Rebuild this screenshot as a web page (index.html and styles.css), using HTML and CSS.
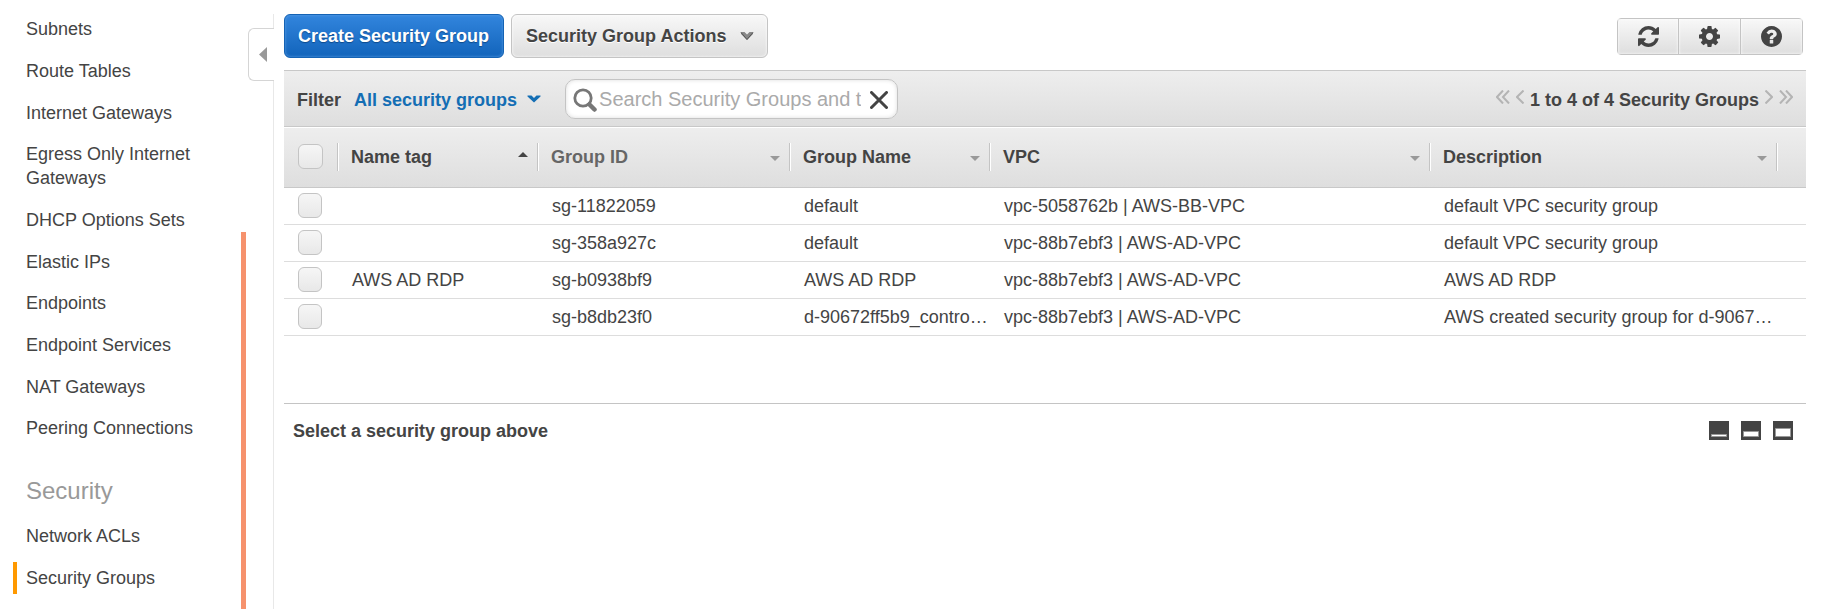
FILE: index.html
```html
<!DOCTYPE html>
<html lang="en">
<head>
<meta charset="utf-8">
<title>Security Groups</title>
<link rel="stylesheet" href="styles.css">
</head>
<body>
<div class="app">
  <aside class="sidebar">
    <nav>
      <ul class="nav-list">
        <li><a href="#">Subnets</a></li>
        <li><a href="#">Route Tables</a></li>
        <li><a href="#">Internet Gateways</a></li>
        <li><a href="#">Egress Only Internet Gateways</a></li>
        <li><a href="#">DHCP Options Sets</a></li>
        <li><a href="#">Elastic IPs</a></li>
        <li><a href="#">Endpoints</a></li>
        <li><a href="#">Endpoint Services</a></li>
        <li><a href="#">NAT Gateways</a></li>
        <li><a href="#">Peering Connections</a></li>
      </ul>
      <h2 class="nav-heading">Security</h2>
      <ul class="nav-list">
        <li><a href="#">Network ACLs</a></li>
        <li><a href="#" class="active">Security Groups</a></li>
      </ul>
    </nav>
    <div class="scroll-mark"></div>
    <button class="collapse" type="button" aria-label="Collapse navigation">
      <svg width="8" height="15" viewBox="0 0 8 15"><path d="M8 0v15L0 7.500z" fill="#999"/></svg>
    </button>
  </aside>

  <main class="main">
    <div class="toolbar">
      <button class="btn primary" type="button">Create Security Group</button>
      <button class="btn" type="button">Security Group Actions
        <svg width="14" height="10" viewBox="0 0 14 10"><path d="M1 1h3.500L7 3.500 9.500 1H13v2L7 9 1 3z" fill="#888"/><path d="M1 1.500l6 7 6-7" fill="none" stroke="#555" stroke-width="1"/></svg>
      </button>
      <div class="icon-group">
        <button type="button" aria-label="Refresh"><svg width="21" height="21" viewBox="0 0 1536 1536"><path d="M1511 928q0 5-1 7-64 268-268 434.500t-478 166.500q-146 0-282.500-55t-243.500-157l-129 129q-19 19-45 19t-45-19-19-45v-448q0-26 19-45t45-19h448q26 0 45 19t19 45-19 45l-137 137q71 66 161 102t187 36q134 0 250-65t186-179q11-17 53-117 8-23 30-23h192q13 0 22.500 9.500t9.500 22.500zm25-800v448q0 26-19 45t-45 19h-448q-26 0-45-19t-19-45 19-45l138-138q-148-137-349-137-134 0-250 65t-186 179q-11 17-53 117-8 23-30 23h-199q-13 0-22.500-9.500t-9.500-22.500v-7q65-268 270-434.500t480-166.500q146 0 284 55.500t245 156.500l130-129q19-19 45-19t45 19 19 45z"/></svg></button>
        <button type="button" aria-label="Settings"><svg width="21" height="21" viewBox="0 0 1536 1536"><path d="M1024 768q0-106-75-181t-181-75-181 75-75 181 75 181 181 75 181-75 75-181zm512-109v222q0 12-8 23t-20 13l-185 28q-19 54-39 91 35 50 107 138 10 12 10 25t-9 23q-27 37-99 108t-94 71q-12 0-26-9l-138-108q-44 23-91 38-16 136-29 186-7 28-36 28h-222q-14 0-24.500-8.500t-11.500-21.500l-28-184q-49-16-90-37l-141 107q-10 9-25 9-14 0-25-11-126-114-165-168-7-10-7-23 0-12 8-23 15-21 51-66.500t54-70.500q-27-50-41-99l-183-27q-13-2-21-12.500t-8-23.500v-222q0-12 8-23t19-13l186-28q14-46 39-92-40-57-107-138-10-12-10-24 0-10 9-23 26-36 98.500-107.500t94.500-71.500q13 0 26 10l138 107q44-23 91-38 16-136 29-186 7-28 36-28h222q14 0 24.500 8.500t11.500 21.500l28 184q49 16 90 37l142-107q9-9 24-9 13 0 25 10 129 119 165 170 7 8 7 22 0 12-8 23-15 21-51 66.500t-54 70.500q26 50 41 98l183 28q13 2 21 12.500t8 23.500z"/></svg></button>
        <button type="button" aria-label="Help"><svg width="21" height="21" viewBox="0 0 1536 1536"><path d="M896 1248v-192q0-14-9-23t-23-9h-192q-14 0-23 9t-9 23v192q0 14 9 23t23 9h192q14 0 23-9t9-23zm256-672q0-88-55.500-163t-138.500-116-170-41q-243 0-371 213-15 24 8 42l132 100q7 6 19 6 16 0 25-12 53-68 86-92 34-24 86-24 48 0 85.500 26t37.500 59q0 38-20 61t-68 45q-63 28-115.500 86.500t-52.500 125.500v36q0 14 9 23t23 9h192q14 0 23-9t9-23q0-19 21.500-49.500t54.500-49.500q32-18 49-28.500t46-35 44.500-48 28-60.500 12.500-81zm384 192q0 209-103 385.500t-279.500 279.500-385.500 103-385.500-103-279.500-279.500-103-385.500 103-385.500 279.500-279.500 385.500-103 385.500 103 279.500 279.500 103 385.500z"/></svg></button>
      </div>
    </div>

    <div class="filter-bar">
      <span class="filter-label">Filter</span>
      <button class="filter-menu" type="button">All security groups
        <svg width="14" height="8" viewBox="0 0 14 8"><path d="M0.500 0.500h4L7 3 9.500 0.500h4v1L7 7.500 0.500 1.500z" fill="#146eb4"/></svg>
      </button>
      <div class="search">
        <svg width="24" height="24" viewBox="0 0 24 24" fill="none" stroke="#777"><circle cx="10" cy="10" r="8.200" stroke-width="2.800"/><path d="M16.500 16.500l5 5" stroke-width="4.500" stroke-linecap="round"/></svg>
        <input type="text" aria-label="Search Security Groups" placeholder="Search Security Groups and their attributes">
        <button type="button" aria-label="Clear search"><svg width="18" height="18" viewBox="0 0 18 18"><path d="M1.500 1.500l15 15m0-15l-15 15" stroke="#444" stroke-width="3" stroke-linecap="round"/></svg></button>
      </div>
      <div class="pager">
        <button type="button" aria-label="First page"><svg width="14" height="14" viewBox="0 0 14 14"><path d="M7 0.500L1 7l6 6.500M13 0.500L7 7l6 6.500"/></svg></button>
        <button type="button" aria-label="Previous page"><svg width="8" height="14" viewBox="0 0 8 14"><path d="M7.500 0.500L1 7l6.500 6.500"/></svg></button>
        <span>1 to 4 of 4 Security Groups</span>
        <button type="button" aria-label="Next page"><svg width="8" height="14" viewBox="0 0 8 14"><path d="M0.500 0.500L7 7 0.500 13.500"/></svg></button>
        <button type="button" aria-label="Last page"><svg width="14" height="14" viewBox="0 0 14 14"><path d="M1 0.500L7 7l-6 6.500M7 0.500L13 7l-6 6.500"/></svg></button>
      </div>
    </div>

    <table class="groups">
      <colgroup>
        <col class="col-check"><col class="col-tag"><col class="col-id"><col class="col-name"><col><col class="col-desc"><col class="col-end">
      </colgroup>
      <thead>
        <tr>
          <th class="check"><div class="head"><input type="checkbox" aria-label="Select all"></div></th>
          <th><div class="head">Name tag <svg width="10" height="11" viewBox="0 0 10 11"><path d="M0 6L5 1l5 5z" fill="#444"/></svg></div></th>
          <th class="muted"><div class="head">Group ID <svg width="10" height="11" viewBox="0 0 10 11"><path d="M0 5h10L5 10z" fill="#999"/></svg></div></th>
          <th><div class="head">Group Name <svg width="10" height="11" viewBox="0 0 10 11"><path d="M0 5h10L5 10z" fill="#999"/></svg></div></th>
          <th><div class="head">VPC <svg width="10" height="11" viewBox="0 0 10 11"><path d="M0 5h10L5 10z" fill="#999"/></svg></div></th>
          <th><div class="head">Description <svg width="10" height="11" viewBox="0 0 10 11"><path d="M0 5h10L5 10z" fill="#999"/></svg></div></th>
          <th></th>
        </tr>
      </thead>
      <tbody>
        <tr><td class="check"><input type="checkbox" aria-label="Select sg-11822059"></td><td></td><td>sg-11822059</td><td>default</td><td>vpc-5058762b | AWS-BB-VPC</td><td>default VPC security group</td><td></td></tr>
        <tr><td class="check"><input type="checkbox" aria-label="Select sg-358a927c"></td><td></td><td>sg-358a927c</td><td>default</td><td>vpc-88b7ebf3 | AWS-AD-VPC</td><td>default VPC security group</td><td></td></tr>
        <tr><td class="check"><input type="checkbox" aria-label="Select sg-b0938bf9"></td><td>AWS AD RDP</td><td>sg-b0938bf9</td><td>AWS AD RDP</td><td>vpc-88b7ebf3 | AWS-AD-VPC</td><td>AWS AD RDP</td><td></td></tr>
        <tr><td class="check"><input type="checkbox" aria-label="Select sg-b8db23f0"></td><td></td><td>sg-b8db23f0</td><td>d-90672ff5b9_controllers</td><td>vpc-88b7ebf3 | AWS-AD-VPC</td><td>AWS created security group for d-90672ff5b9 directory controllers</td><td></td></tr>
      </tbody>
    </table>

    <section class="details">
      <h3>Select a security group above</h3>
      <div class="pane-sizes">
        <button type="button" aria-label="Small pane"><svg width="20" height="19" viewBox="0 0 20 19"><path d="M0 0h20v19H0z" fill="#444"/><path d="M2.500 13.500h15v2h-15z" fill="#fff" stroke="#999"/></svg></button>
        <button type="button" aria-label="Medium pane"><svg width="20" height="19" viewBox="0 0 20 19"><path d="M0 0h20v19H0z" fill="#444"/><path d="M2.500 10.500h15v5h-15z" fill="#fff" stroke="#999"/></svg></button>
        <button type="button" aria-label="Large pane"><svg width="20" height="19" viewBox="0 0 20 19"><path d="M0 0h20v19H0z" fill="#444"/><path d="M2.500 7.500h15v8h-15z" fill="#fff" stroke="#999"/></svg></button>
      </div>
    </section>
  </main>
</div>
</body>
</html>
```
FILE: styles.css
```css
* { box-sizing: border-box; }

body {
  margin: 0;
  background: #fff;
  color: #444;
  font: 18px/24px "Liberation Sans", Arial, sans-serif;
}

button, input { font: inherit; color: inherit; }

button {
  margin: 0;
  padding: 0;
  border: 0;
  background: none;
  cursor: pointer;
}

svg { display: block; flex: none; }

.app {
  display: flex;
  min-height: 100vh;
  padding-top: 14px;
}

/* Navigation */
.sidebar {
  position: relative;
  flex: none;
  width: 274px;
  padding-left: 13px;
  border-right: 1px solid #e8e8e8;
}

.nav-list {
  margin: 0;
  padding: 0;
  list-style: none;
}

.nav-list:first-child { margin-top: -1px; }

.nav-list li { margin-bottom: 10px; }
.nav-list li:nth-child(3n) { margin-bottom: 9px; }
.nav-list li:last-child { margin-bottom: 0; }

.nav-list a {
  display: block;
  width: 200px;
  padding: 4px 0 4px 9px;
  border-left: 4px solid transparent;
  color: #444;
  text-decoration: none;
}

.nav-list a.active { border-left-color: #ff9900; }

.nav-heading {
  margin: 31px 0 13px 13px;
  color: #999;
  font-size: 24px;
  font-weight: normal;
  line-height: 32px;
}

.scroll-mark {
  position: absolute;
  top: 218px;
  right: 27px;
  bottom: 0;
  width: 5px;
  background: #f6926d;
}

.collapse {
  position: absolute;
  top: 14px;
  right: -1px;
  display: flex;
  align-items: center;
  width: 26px;
  height: 53px;
  padding-left: 10px;
  border: 1px solid #d5d5d5;
  border-right: 0;
  border-radius: 6px 0 0 6px;
  background: #fff;
}

/* Content */
.main {
  flex: 1;
  min-width: 0;
  padding: 0 35px 0 10px;
}

.toolbar {
  display: flex;
  align-items: center;
  gap: 7px;
  margin-bottom: 12px;
}

.btn {
  display: flex;
  align-items: center;
  gap: 14px;
  height: 44px;
  padding: 0 13px 0 14px;
  border: 1px solid #c4c4c4;
  border-radius: 6px;
  background: linear-gradient(#f8f8f8, #dedede);
  box-shadow: inset 0 0 3px #fff;
  font-weight: bold;
  text-shadow: 0 1px 0 #fff;
  white-space: nowrap;
}

.btn.primary {
  padding-left: 13px;
  padding-right: 14px;
  border-color: #1563b4;
  background: linear-gradient(#3285dd, #1264bb);
  box-shadow: inset 0 0 3px #5b9fe4;
  color: #fff;
  text-shadow: 0 1px 1px #0d4a8c;
}

.icon-group {
  display: flex;
  height: 37px;
  margin-left: auto;
  margin-right: 3px;
  border: 1px solid #c4c4c4;
  border-radius: 4px;
  background: linear-gradient(#f8f8f8, #dedede);
}

.icon-group button {
  display: flex;
  align-items: center;
  justify-content: center;
  width: 62px;
  box-shadow: inset 0 0 3px #fff;
}

.icon-group button:first-child { width: 60px; }
.icon-group button + button { border-left: 1px solid #c4c4c4; }
.icon-group svg { fill: #444; }

.filter-bar {
  display: flex;
  align-items: center;
  height: 57px;
  padding: 0 13px;
  border-top: 1px solid #c8c8c8;
  border-bottom: 1px solid #c8c8c8;
  background: linear-gradient(#eee, #dedede);
  font-weight: bold;
  white-space: nowrap;
}

.filter-label { margin-right: 13px; padding-top: 2px; }

.filter-menu {
  display: flex;
  align-items: center;
  gap: 10px;
  margin-right: 24px;
  padding-top: 2px;
  color: #146eb4;
}

.filter-menu svg { margin-bottom: 2px; }

.search {
  display: flex;
  align-items: center;
  width: 333px;
  height: 40px;
  padding: 0 9px 0 7px;
  border: 1px solid #c4c4c4;
  border-radius: 10px;
  background: #fff;
  box-shadow: inset 0 0 4px #ddd;
}

.search svg { margin-top: 2px; }

.search input {
  flex: 1;
  min-width: 0;
  margin: 0 9px 0 2px;
  padding: 0;
  border: 0;
  outline: 0;
  background: none;
  font-size: 20px;
  font-weight: normal;
}

.search input::placeholder { color: #aaa; opacity: 1; }

.pager {
  display: flex;
  align-items: center;
  gap: 6px;
  margin-left: auto;
}

.pager span { padding-top: 2px; }
.pager button { padding-bottom: 4px; }
.pager svg { fill: none; stroke: #b4b4b4; stroke-width: 2; }

/* Table */
.groups {
  width: 100%;
  border-collapse: collapse;
  table-layout: fixed;
}

.col-check { width: 54px; }
.col-tag { width: 200px; }
.col-id { width: 252px; }
.col-name { width: 200px; }
.col-desc { width: 347px; }
.col-end { width: 29px; }

.groups thead {
  background: linear-gradient(#eee, #dedede);
  box-shadow: inset 0 1px 0 #fff;
}

.groups th {
  height: 60px;
  padding: 0;
  border-bottom: 1px solid #c8c8c8;
  text-align: left;
}

.head {
  display: flex;
  align-items: center;
  justify-content: space-between;
  height: 28px;
  padding: 0 9px 0 13px;
  border-right: 1px solid #c4c4c4;
  box-shadow: 1px 0 0 #fff;
}

.check .head { padding-left: 14px; }

.groups .muted { color: #666; }

.groups td {
  height: 37px;
  padding: 0 0 0 14px;
  overflow: hidden;
  border-bottom: 1px solid #ddd;
  text-overflow: ellipsis;
  white-space: nowrap;
}

.groups input {
  display: block;
  flex: none;
  width: 25px;
  height: 25px;
  margin: 0;
  appearance: none;
  border: 1px solid #c4c4c4;
  border-radius: 6px;
  background: linear-gradient(#f6f6f6, #e8e8e8);
}

.groups td input { width: 24px; }

/* Details pane */
.details {
  display: flex;
  align-items: flex-start;
  justify-content: space-between;
  margin-top: 67px;
  padding: 15px 13px 0 9px;
  border-top: 1px solid #c4c4c4;
}

.details h3 { margin: 0; font-size: 18px; }
.pane-sizes { display: flex; gap: 12px; padding-top: 2px; }
```
